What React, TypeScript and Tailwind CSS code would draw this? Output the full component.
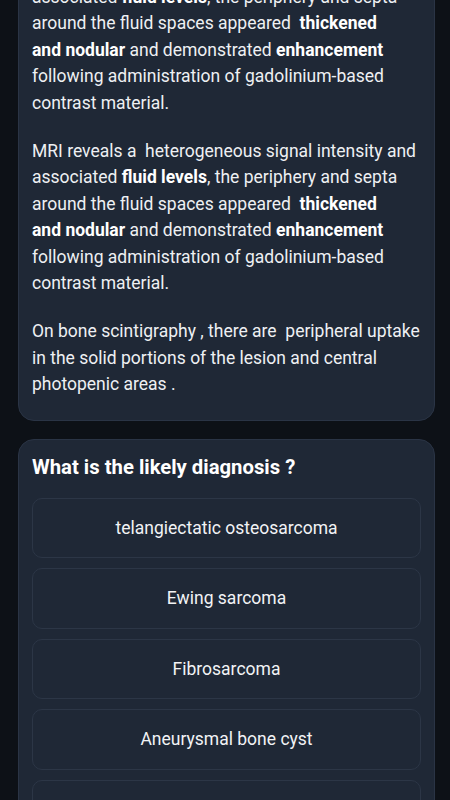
import React from "react"

const options = [
  "telangiectatic osteosarcoma",
  "Ewing sarcoma",
  "Fibrosarcoma",
  "Aneurysmal bone cyst",
  "Chondrosarcoma",
]

function MriParagraph() {
  return (
    <p>
      MRI reveals a&nbsp; heterogeneous signal intensity and associated <b className="font-bold text-white">fluid levels</b>, the
      periphery and septa around the fluid spaces appeared&nbsp; <b className="font-bold text-white">thickened</b>{" "}
      <b className="whitespace-nowrap font-bold text-white">and nodular</b> and demonstrated{" "}
      <b className="font-bold text-white">enhancement</b> following administration of gadolinium-based contrast material.
    </p>
  )
}

export default function App() {
  return (
    <div className="h-[800px] w-[450px] overflow-hidden bg-[#0d1117] font-['Roboto',sans-serif] text-[#eef0f3]">
      <div className="-mt-[58px] ml-[18px] mr-[15px] flex flex-col gap-[18px]">
        {/* case description */}
        <div className="rounded-2xl border border-[#2a3445] bg-[#1f2836] px-[13px] pt-[14px] pb-[22px] text-[17.5px] leading-[26.5px]">
          <div className="flex flex-col gap-[21.5px]">
            <MriParagraph />
            <MriParagraph />
            <p>
              On bone scintigraphy , there are&nbsp; peripheral uptake in the solid portions of the lesion and central
              photopenic areas .
            </p>
          </div>
        </div>

        {/* question */}
        <div className="rounded-2xl border border-[#2a3445] bg-[#1f2836] px-[13px] pt-[13px] pb-6">
          <h2 className="text-[20.3px] font-bold leading-7 text-white">What is the likely diagnosis ?</h2>
          <div className="mt-[17px] flex flex-col gap-[10px]">
            {options.map((o) => (
              <button
                key={o}
                className="flex h-[60.5px] items-center justify-center rounded-[10px] border border-[#2c3646] bg-[#1f2836] text-[17.5px] text-[#f2f3f5]"
              >
                {o}
              </button>
            ))}
          </div>
        </div>
      </div>
    </div>
  )
}
